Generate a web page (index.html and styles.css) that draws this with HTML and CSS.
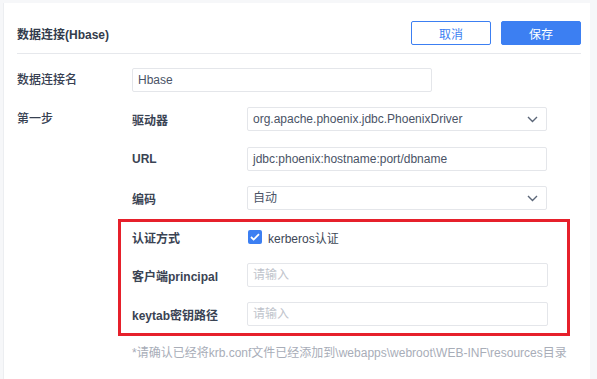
FILE: index.html
```html
<!DOCTYPE html>
<html lang="zh-CN">
<head>
  <meta charset="UTF-8">
  <title>数据连接(Hbase)</title>
  <link rel="stylesheet" href="styles.css">
</head>
<body>
  <div class="panel">
    <div class="panel-header">
      <div class="panel-title">数据连接(Hbase)</div>
      <div class="actions">
        <button class="btn btn-plain">取消</button>
        <button class="btn btn-primary">保存</button>
      </div>
    </div>

    <div class="form">
      <div class="form-row">
        <div class="label">数据连接名</div>
        <div class="input name-input">Hbase</div>
      </div>

      <div class="form-row step">
        <div class="label">第一步</div>
        <div class="step-body">
          <div class="sub-row">
            <div class="sub-label">驱动器</div>
            <div class="input select">org.apache.phoenix.jdbc.PhoenixDriver
              <svg class="arrow" width="11" height="7" viewBox="0 0 11 7"><path d="M1 1l4.5 4.5L10 1" fill="none" stroke="#5b6678" stroke-width="1.4"/></svg>
            </div>
          </div>
          <div class="sub-row">
            <div class="sub-label">URL</div>
            <div class="input">jdbc:phoenix:hostname:port/dbname</div>
          </div>
          <div class="sub-row">
            <div class="sub-label">编码</div>
            <div class="input select">自动
              <svg class="arrow" width="11" height="7" viewBox="0 0 11 7"><path d="M1 1l4.5 4.5L10 1" fill="none" stroke="#5b6678" stroke-width="1.4"/></svg>
            </div>
          </div>

          <div class="auth-box">
            <div class="sub-row check-row">
              <div class="sub-label">认证方式</div>
              <label class="checkbox">
                <span class="box"><svg width="10" height="8" viewBox="0 0 10 8"><path d="M1 4l2.6 2.6L9 1.2" fill="none" stroke="#fff" stroke-width="1.8"/></svg></span>
                kerberos认证
              </label>
            </div>
            <div class="sub-row">
              <div class="sub-label">客户端principal</div>
              <div class="input wide placeholder">请输入</div>
            </div>
            <div class="sub-row">
              <div class="sub-label">keytab密钥路径</div>
              <div class="input wide placeholder">请输入</div>
            </div>
          </div>

          <div class="note">*请确认已经将krb.conf文件已经添加到\webapps\webroot\WEB-INF\resources目录</div>
        </div>
      </div>
    </div>
  </div>
</body>
</html>
```

FILE: styles.css
```css
/* General Styles */
body {
  margin: 0;
  background: #f6f7f9;
  font-family: "Liberation Sans", "Noto Sans CJK SC", sans-serif;
  font-size: 12px;
  color: #3d4757;
}

.panel {
  margin: 3px 7px 0 3px;
  height: 376px;
  background: #fff;
  border-left: 1px solid #eceef1;
  box-sizing: border-box;
  padding: 0 9px 0 13px;
}

/* Header */
.panel-header {
  display: flex;
  align-items: center;
  justify-content: space-between;
  padding: 18px 0 8px;
  border-bottom: 1px solid #e6e8ec;
}

.panel-title {
  font-weight: bold;
  color: #333c4c;
}

.actions {
  display: flex;
  gap: 10px;
}

.btn {
  width: 80px;
  height: 24px;
  border-radius: 2px;
  font-family: inherit;
  font-size: 12px;
  cursor: pointer;
}

.btn-plain {
  background: #fff;
  border: 1px solid #3c7ff2;
  color: #3c7ff2;
}

.btn-primary {
  background: #3c7ff2;
  border: 1px solid #3c7ff2;
  color: #fff;
}

/* Form */
.form {
  padding-top: 14px;
}

.form-row {
  display: flex;
  align-items: center;
}

.form-row.step {
  align-items: flex-start;
  margin-top: 15px;
}

.label {
  width: 115px;
  flex-shrink: 0;
  line-height: 24px;
  font-weight: 500;
  color: #374051;
}

.step-body {
  width: 415px;
}

.sub-row {
  display: flex;
  align-items: center;
  margin-bottom: 15px;
}

.step-body > .sub-row:first-child {
  margin-bottom: 16px;
}

.sub-label {
  width: 115px;
  flex-shrink: 0;
  font-weight: bold;
  color: #3a4353;
}

.input {
  height: 24px;
  box-sizing: border-box;
  border: 1px solid #e4e6ea;
  border-radius: 2px;
  padding: 0 5px;
  line-height: 22px;
  color: #4a5366;
  flex: 1;
  position: relative;
}

.name-input {
  flex: none;
  width: 300px;
}

.select .arrow {
  position: absolute;
  right: 8px;
  top: 8px;
}

.input.wide {
  margin-right: -1px;
}

.placeholder {
  color: #c0c4cc;
}

/* Kerberos box */
.auth-box {
  margin: -6px -23px 0 -14px;
  border: 3px solid #e6202b;
  padding: 3px 20px 0 11px;
}

.auth-box .sub-row {
  margin-bottom: 15px;
}

.auth-box .check-row {
  height: 24px;
  margin-bottom: 14px;
}

.auth-box .sub-row:last-child {
  margin-bottom: 7px;
}

.checkbox {
  display: flex;
  align-items: center;
  gap: 6px;
  margin-left: 1px;
  color: #3d4757;
}

.checkbox .box {
  width: 14px;
  height: 14px;
  border-radius: 2px;
  background: #3c7ff2;
  display: flex;
  align-items: center;
  justify-content: center;
}

.note {
  margin-top: 8px;
  color: #a8adb8;
  line-height: 18px;
  white-space: nowrap;
}
```
